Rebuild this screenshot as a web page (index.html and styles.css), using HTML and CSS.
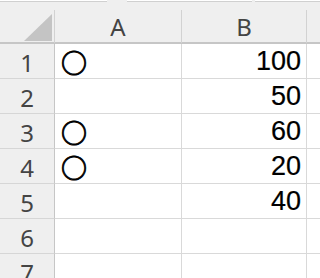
FILE: index.html
```html
<!DOCTYPE html>
<html lang="ja">
<head>
    <meta charset="UTF-8">
    <title>Sheet</title>
    <link rel="stylesheet" href="styles.css">
</head>
<body>
    <!-- 上部のツールバー残り -->
    <div class="topbar">
        <div class="topbar-box name-box"></div>
        <div class="topbar-box formula-box"></div>
        <div class="topbar-box rest-box"></div>
    </div>

    <!-- 列見出し -->
    <div class="head">
        <div class="head-cell corner">
            <svg class="corner-mark" width="28" height="27" viewBox="0 0 28 27">
                <polygon points="0,27 28,27 28,0" fill="#c4c4c4"/>
            </svg>
        </div>
        <div class="head-cell">A</div>
        <div class="head-cell">B</div>
        <div class="head-cell last"></div>
    </div>

    <!-- セル -->
    <div class="grid">
        <div class="row-head">1</div><div class="cell mark">○</div><div class="cell num">100</div><div class="cell rest"></div>
        <div class="row-head">2</div><div class="cell mark"></div><div class="cell num">50</div><div class="cell rest"></div>
        <div class="row-head">3</div><div class="cell mark">○</div><div class="cell num">60</div><div class="cell rest"></div>
        <div class="row-head">4</div><div class="cell mark">○</div><div class="cell num">20</div><div class="cell rest"></div>
        <div class="row-head">5</div><div class="cell mark"></div><div class="cell num">40</div><div class="cell rest"></div>
        <div class="row-head">6</div><div class="cell mark"></div><div class="cell num"></div><div class="cell rest"></div>
        <div class="row-head">7</div><div class="cell mark"></div><div class="cell num"></div><div class="cell rest"></div>
    </div>
</body>
</html>
```

FILE: styles.css
```css
* {
    box-sizing: border-box;
}

body {
    margin: 0;
    width: 320px;
    height: 278px;
    overflow: hidden;
    background: #ffffff;
    font-family: "Liberation Sans", Arial, sans-serif;
}

/* 上部 */
.topbar {
    display: flex;
    height: 2px;
    background: #efefef;
}

.topbar-box {
    height: 2px;
    background: #ffffff;
    border-bottom: 1px solid #d0d0d0;
}

.name-box {
    width: 107px;
}

.formula-box {
    width: 125px;
    margin-left: 20px;
}

.rest-box {
    flex: 1;
    margin-left: 3px;
}

/* 列見出し */
.head {
    display: grid;
    grid-template-columns: 55px 127px 125px 1fr;
    height: 42px;
    background: #efefef;
    border-bottom: 2px solid #c6c6c6;
}

.head-cell {
    margin-top: 8px;
    border-right: 1px solid #d2d2d2;
    display: flex;
    align-items: center;
    justify-content: center;
    font-family: "Noto Sans", "Open Sans", sans-serif;
    font-size: 24px;
    color: #444444;
}

.head-cell.corner {
    align-items: flex-end;
    justify-content: flex-end;
    padding: 0 2px 2px 0;
}

.head-cell.last {
    border-right: none;
}

.corner-mark {
    display: block;
}

/* セル */
.grid {
    display: grid;
    grid-template-columns: 55px 127px 125px 1fr;
    grid-auto-rows: 35px;
}

.row-head {
    background: #efefef;
    border-right: 1px solid #c6c6c6;
    border-bottom: 1px solid #d6d6d6;
    display: flex;
    align-items: center;
    justify-content: center;
    padding-top: 2px;
    font-family: "Noto Sans", "Open Sans", sans-serif;
    font-size: 24px;
    color: #444444;
}

.cell {
    border-right: 1px solid #d9d9d9;
    border-bottom: 1px solid #d9d9d9;
    display: flex;
    align-items: center;
    color: #000000;
}

.cell.rest {
    border-right: none;
}

.mark {
    padding-left: 6px;
    font-family: "Noto Sans CJK JP", sans-serif;
    font-size: 26px;
    font-weight: 700;
    -webkit-text-stroke: 0.8px #000000;
}

.num {
    justify-content: flex-end;
    padding-right: 5px;
    font-size: 27px;
    -webkit-text-stroke: 0.2px #000000;
}
```
